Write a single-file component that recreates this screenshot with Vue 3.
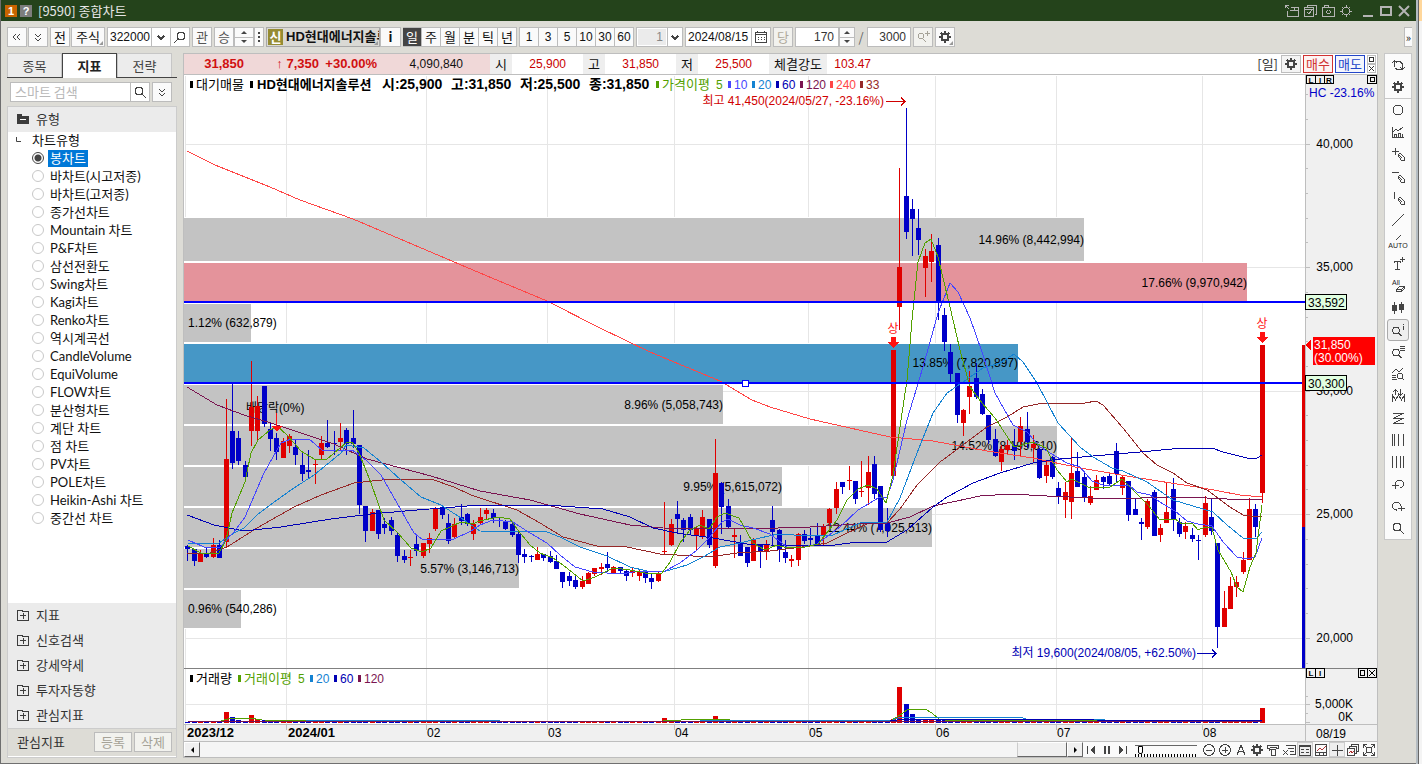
<script setup>
import { ref } from 'vue'

const GEAR = 'M8 4.5a3.5 3.5 0 1 0 .01 0zM8 2v2M8 12v2M2 8h2M12 8h2M4 4l1.500 1.500M10.500 10.500L12 12M4 12l1.500-1.500M10.500 5.500L12 4'
const LENS = 'M7 3a4 4 0 1 0 .01 0zM10 10l4 4'

const chartTypes = [
  '봉차트', '바차트(시고저종)', '바차트(고저종)', '종가선차트', 'Mountain 차트', 'P&F차트', '삼선전환도',
  'Swing차트', 'Kagi차트', 'Renko차트', '역시계곡선', 'CandleVolume', 'EquiVolume', 'FLOW차트',
  '분산형차트', '계단 차트', '점 차트', 'PV차트', 'POLE차트', 'Heikin-Ashi 차트', '중간선 차트',
]
const chartType = ref('봉차트')
const sections = ['지표', '신호검색', '강세약세', '투자자동향', '관심지표']
const periods = ['일', '주', '월', '분', '틱', '년']
const minutes = ['1', '3', '5', '10', '30', '60']

const titleIcons = [
  { n: '내보내기', d: 'M1 2l4 4M1.500 5V2.500H5M6.500 4.500h8v9h-11V8M6 7.500h8M10.500 4v3' },
  { n: '창 복사', d: 'M5.500 4V2.500h9v9h-2M2.500 4.500h9v9h-9zM3 6.500h8M5 9l2 2 3-4' },
  { n: '화면 캡처', d: 'M2.500 4.500h12v9h-12zM4 4V2.500h4V4M8.500 7a2 2 0 1 0 .01 0z' },
  { n: '설정', d: GEAR },
]

const sideTools = [
  { n: '새로고침', d: 'M4.500 10V4.500H10l2 2V9M2 6l2.500-2.500L7 6M12.500 7v5.500H7L5 11M10 10l2.500 2.500L15 10' },
  { n: '설정', d: GEAR, w: 2 },
  { n: '원', d: 'M8 3a5 5 0 1 0 .01 0z' },
  { n: '지표', d: 'M2.500 3v10.500H14M4.500 13v-3h2v3M8.500 13V9h2v4M12.500 13v-3M3 8l3-3 2 2 5-4' },
  { n: '십자선', d: 'M2 5.500h7M5.500 2v7M8 9l2-2 4 4v3h-3zM9 9l3 3' },
  { n: '수평선', d: 'M2 4.500h7M8 9l2-2 4 4v3h-3zM9 9l3 3' },
  { n: '수직선', d: 'M4.500 2v7M8 9l2-2 4 4v3h-3zM9 9l3 3' },
  { n: '추세선', d: 'M2 14L14 2' },
  { n: '자동추세선', d: 'M6 6l5-5', t: 'AUTO' },
  { n: '글자', d: 'M4.500 7V5.500h6V7M7.500 5v8M5 13.500h5M10 3.500h5M12.500 1v5' },
  { n: '전체삭제', d: 'M6.500 11.500l3-3h5v2l-3 3h-5zM7 11.500h4.500l3-3M11.500 11v3', a: 'All' },
  { n: '봉', d: 'M4.500 2v12M11.500 2v11', f: 'M2 5h5v6H2zM9 4h5v6H9z' },
  { n: '정보조회', d: 'M6 5a3.500 3.500 0 1 0 .01 0zM8.500 11l3 3M13.500 2v1M13.500 4v4', on: true },
  { n: '목록조회', d: 'M6 5a3.500 3.500 0 1 0 .01 0zM8.500 11l3 3M10 2.500h5M10 4.500h5M10 6.500h5' },
  { n: '패턴조회', d: 'M2 7l4-4 3 3 4-4M2 9.500h4M2 11.500h4M2 13.500h5M10 7a3 3 0 1 0 .01 0zM12 12l2 2' },
  { n: '고저표시', d: 'M2.500 14V7l3 5 3-5 3 5 3-5v7M5.500 2v5M3 4l2.500-2L8 4M10.500 1v6M8 5l2.500 2L13 5' },
  { n: '지그재그', d: 'M3 3.500h11M14 3L3 8.500h11M14 8L3 13.500h11' },
  { n: '분할선', d: 'M2.500 2v12M4.500 2v12M8.500 2v12M13.500 2v12' },
  { n: '등분선', d: 'M2.500 2v12M6.500 2v12M10.500 2v12M13.500 2v12' },
  { n: '되돌리기', d: 'M5.500 8a4 4 0 1 1 4 4M2 9.500h7M5.500 7v6' },
  { n: '다시하기', d: 'M10.500 8a4 4 0 1 0-4 4M8 10.500h7M11.500 8v5' },
  { n: '돋보기', d: LENS },
]

const bottomTools = [
  { n: '축소', d: 'M8 2.500a5.500 5.500 0 1 0 .01 0zM5 8.500h6' },
  { n: '확대', d: 'M8 2.500a5.500 5.500 0 1 0 .01 0zM5 8.500h6M8.500 5v6' },
  { n: '글자', d: 'M4 13L8 3l4 10M5.500 9.500h5' },
  { n: '설정', d: GEAR, w: 2 },
  { n: '도구', d: 'M2.500 3.500h11M2.500 3v3h2v2l3-1M13.500 3v3h-3M6.500 7.500h4v6h-4zM5 5.500h7' },
  { n: '엑셀', d: 'M5 3.500h9v9H9M7 6.500h6M9 9.500h4M2 8l5 5M7 8l-5 5' },
  { n: '데이터', d: 'M2.500 3.500h11v10h-11zM2 4.500h12M4 7.500h3M4 10.500h3M9 7.500h3M9 10.500h3', on: true },
  { n: '차트', d: 'M2.500 2.500h11v11h-11zM2 10.500h12M6.500 11v3M10.500 11v3', r: 'M4 9l3-3 2 2 4-4' },
  { n: '십자', d: 'M8.500 3v11M3 8.500h11', on: true },
  { n: '복사', d: 'M6.500 4V2.500h7v7H12M4.500 6V4.500h7v7H10M2.500 6.500h7v7h-7z', r: 'M4 11l2-2 1 2 2-2' },
  { n: '전체화면', d: 'M2.500 6V2.500H6M10 2.500h3.500V6M13.500 10v3.500H10M6 13.500H2.500V10M5.500 5.500h5v5h-5zM2 2l3 3M14 2l-3 3M2 14l3-3M14 14l-3-3' },
]

/* volume-at-price rows: y, height, right edge, label, fill */
const supply = [
  { y: 218, h: 43, x: 1084, t: '14.96% (8,442,994)', c: '#c3c3c3' },
  { y: 263, h: 39, x: 1247, t: '17.66% (9,970,942)', c: '#e4939b' },
  { y: 304, h: 38, x: 251, t: '1.12% (632,879)', c: '#c3c3c3', left: true },
  { y: 344, h: 38, x: 1018, t: '13.85% (7,820,897)', c: '#4697c6' },
  { y: 385, h: 39, x: 723, t: '8.96% (5,058,743)', c: '#c3c3c3' },
  { y: 426, h: 39, x: 1057, t: '14.52% (8,199,610)', c: '#c3c3c3' },
  { y: 467, h: 39, x: 782, t: '9.95% (5,615,072)', c: '#c3c3c3' },
  { y: 508, h: 39, x: 932, t: '12.44% (7,025,513)', c: '#c3c3c3' },
  { y: 549, h: 39, x: 519, t: '5.57% (3,146,713)', c: '#c3c3c3' },
  { y: 590, h: 38, x: 241, t: '0.96% (540,286)', c: '#c3c3c3', left: true },
]

/* one candle per entry: direction, high, body top, body bottom, low */
const candleData = `b545,546,549,561 b549,549,561,566 r550,554,562,562 b547,554,557,558 r538,545,557,558 b540,545,558,558
r399,459,542,548 b384,431,463,469 b431,438,461,465 b461,465,477,478 r361,407,431,446 r396,406,431,441
b386,386,424,427 b423,429,439,451 b433,438,452,460 r438,441,458,458 r434,436,446,453 b440,447,455,465
b452,465,474,481 b450,470,472,478 r459,464,465,484 r436,443,455,460 b420,443,447,448 b431,443,444,455
r423,438,442,450 b428,430,444,455 b410,438,444,448 b445,445,505,514 b506,506,531,542 r509,512,531,531
b510,510,534,539 b518,524,528,534 b517,520,531,535 b532,535,556,562 b550,556,560,563 r550,557,558,566
b535,544,551,556 r543,543,556,558 r533,538,544,553 r507,509,529,531 b506,507,515,519 b514,523,541,544
r518,524,537,538 b504,517,521,525 b513,514,524,526 r520,524,534,540 r508,517,523,525 r508,510,514,519
b509,513,518,523 b517,520,521,527 b520,522,529,530 b522,524,535,537 b532,534,555,563 b549,554,557,563
b555,556,557,562 r547,554,560,560 b554,554,558,561 b551,556,562,563 b555,561,569,569 b572,572,582,588
b572,576,581,586 b576,580,587,589 r576,581,587,589 r572,573,584,584 r568,568,574,576 r563,567,569,575
b552,564,568,572 r566,567,573,573 b567,567,571,574 b570,571,576,581 r567,571,573,577 r569,571,576,581
b571,571,578,583 b573,578,582,589 r572,573,581,582 r502,551,552,555 r519,524,545,546 b501,514,519,534
b518,520,530,542 b514,517,530,535 r526,528,536,551 r510,517,537,539 b519,519,545,548 r439,473,566,568
b482,483,507,534 b499,506,527,529 r528,535,537,558 b535,543,556,556 b547,547,563,567 r538,540,561,561
b545,545,552,568 r540,544,551,560 b506,520,532,546 b529,530,550,562 b540,552,558,563 r555,559,561,567
r533,534,560,566 b530,534,541,544 b528,538,540,545 b523,535,545,546 r524,526,535,546 r508,509,523,526
r482,489,508,514 b482,482,487,494 r466,480,481,490 b481,481,499,504 r461,491,492,497 r456,472,488,505
b456,464,494,499 b486,486,530,532 b508,523,531,537 r350,350,476,476 r168,267,307,330 b108,196,232,239
b199,209,219,256 b209,228,240,255 r249,256,268,297 r234,251,262,282 b238,245,303,320 b308,315,342,351
b344,352,374,382 b373,373,415,423 r409,410,423,436 r371,386,397,414 b363,378,397,399 b389,394,414,415
b415,415,440,444 b429,439,456,457 r445,449,462,471 r440,445,450,455 b429,445,451,460 r417,426,442,456
b412,429,442,448 r435,444,448,463 b448,449,478,479 r461,465,476,483 b456,457,477,479 b482,488,496,504
r482,492,500,518 r438,473,502,519 b452,471,487,487 b473,477,498,502 r486,496,503,505 r475,480,490,490
b476,477,482,489 b472,476,484,485 b443,451,474,482 r476,477,488,495 b481,481,515,521 b499,509,515,515
b518,522,524,540 r499,501,527,529 b490,492,536,536 r524,528,535,542 r482,512,523,523 b478,489,519,531
b518,522,534,537 r522,526,532,539 b528,535,539,542 b535,540,541,560 r496,503,535,537 b499,517,531,535
b543,543,627,648 r591,608,627,627 r577,586,609,609 r576,582,587,597 r552,560,572,574 r498,509,560,560
b504,509,527,537 r345,345,493,503`

/* volume bar tops that rise above the floor of the pane */
const volumeTops = { 6: 712, 7: 717, 8: 720, 10: 715, 11: 719, 12: 720, 75: 718, 76: 720, 83: 716, 84: 719, 92: 720, 111: 719, 112: 687, 113: 704, 114: 714, 115: 719, 116: 719, 117: 720, 118: 720, 119: 720, 124: 720, 169: 708 }

const candles = candleData.split(/\s+/).map((s, i) => {
  const [high, top, bottom, low] = s.slice(1).split(',').map(Number)
  const x = Math.round(187.4 + i * 6.357)
  return { x, high, top, low, h: Math.max(1, bottom - top), c: s[0] === 'r' ? '#e00000' : '#0000c8', v: volumeTops[i] || 722 }
})

const averages = [
  { c: '#ff4646', p: '187,151 215,165 240,175 270,187 300,200 353,219 426,250 480,273 547,301 600,328 650,352 720,381 752,400 770,407 810,419 890,437 933,441 987,451 1033,458 1080,468 1133,477 1177,484 1203,488 1240,495 1262,497' },
  { c: '#962828', p: '187,553 207,554 227,547 257,528 294,507 321,495 354,483 391,479 431,479 454,487 471,495 480,498 517,510 540,523 563,537 597,546 627,547 660,554 710,557 737,553 770,551 810,546 827,543 847,533 867,524 887,523 900,509 917,485 940,462 967,442 987,427 1007,417 1023,407 1043,403 1085,403 1096,401 1103,405 1123,428 1143,453 1157,465 1173,473 1187,483 1207,490 1230,507 1243,515 1257,517 1262,516' },
  { c: '#7a1450', p: '187,387 217,405 244,415 271,423 301,433 334,444 367,459 401,468 431,476 480,491 530,500 580,514 630,525 663,528 747,529 810,527 857,524 887,523 910,517 933,506 957,501 980,496 1010,494 1047,496 1113,499 1170,497 1207,498 1247,500 1262,499' },
  { c: '#0000b4', p: '187,515 214,525 244,531 281,527 331,519 371,514 417,510 480,505 547,505 603,509 630,517 653,528 677,533 713,538 747,544 770,545 827,546 850,543 887,542 907,530 933,507 947,497 973,483 1000,473 1033,463 1060,459 1093,456 1140,452 1183,448 1212,448 1223,452 1247,458 1257,458 1262,455' },
  { c: '#1482d2', p: '188,544 219,543 234,533 244,528 257,515 277,500 291,490 314,475 341,453 346,445 364,448 381,462 401,480 421,497 441,505 461,518 480,531 547,532 560,537 580,547 607,556 630,567 647,571 663,572 687,565 703,557 720,547 740,543 760,538 778,534 810,536 833,535 860,523 887,522 900,498 917,453 933,413 947,393 963,382 983,368 1000,363 1014,354 1023,362 1037,383 1058,423 1080,447 1093,457 1112,468 1123,471 1147,482 1173,500 1203,509 1213,512 1227,525 1243,538 1256,539 1262,532' },
  { c: '#4646ff', p: '188,540 204,547 219,548 234,532 245,517 264,473 281,443 291,439 309,439 322,450 334,451 352,450 366,460 381,475 397,503 414,533 422,539 454,539 471,531 480,525 493,520 513,522 530,533 547,543 560,555 575,567 593,572 620,574 640,571 663,572 680,563 697,550 709,538 722,522 728,519 740,525 753,528 770,534 787,547 800,548 817,544 840,527 858,510 880,497 887,497 893,480 907,420 920,377 927,353 938,313 950,283 958,292 970,318 982,352 995,393 1013,425 1027,432 1040,447 1067,463 1080,467 1092,481 1103,485 1129,485 1137,492 1150,495 1163,504 1175,511 1187,521 1198,524 1212,526 1223,542 1237,557 1247,559 1255,557 1262,538' },
  { c: '#52a000', p: '188,546 201,553 219,553 226,540 232,513 245,482 251,453 258,440 270,430 277,426 287,435 301,451 314,459 327,459 346,443 352,442 359,453 371,483 384,520 397,532 411,548 422,552 431,548 441,531 461,522 472,524 480,521 497,517 510,519 517,529 530,545 540,553 553,558 563,565 583,581 595,577 613,568 630,570 650,574 662,573 670,562 680,543 690,530 700,525 709,529 717,517 725,513 739,518 747,532 753,543 765,550 777,545 787,548 805,547 818,544 837,520 847,500 858,489 868,485 877,489 886,503 893,475 900,427 907,380 912,320 918,262 925,243 931,239 938,257 950,307 960,350 970,387 982,403 995,418 1014,447 1033,442 1046,448 1057,470 1067,482 1072,479 1090,488 1110,487 1122,479 1135,492 1148,505 1160,520 1175,519 1182,524 1192,523 1198,530 1205,527 1212,528 1218,550 1231,572 1237,587 1243,592 1250,567 1256,553 1262,505' },
]
const volumeAverages = [
  { c: '#52a000', p: '188,722 221,721 228,719 250,718 262,720 640,722 663,721 700,719 730,720 890,721 900,715 907,710 925,709 932,713 940,720 1262,721' },
  { c: '#1482d2', p: '188,722 425,720 500,721 700,721 893,720 900,717 1020,717 1026,719 1262,722' },
  { c: '#0000b4', p: '188,722 890,721 905,719 1042,719 1068,719 1094,720 1262,721' },
  { c: '#7a1450', p: '188,721 890,721 1262,721' },
]

const gridX = [185, 286, 426, 547, 674, 808, 935, 1056, 1202]
const prices = [{ y: 144, t: '40,000' }, { y: 267, t: '35,000' }, { y: 391, t: '30,000' }, { y: 514, t: '25,000' }, { y: 638, t: '20,000' }]
const minorTicks = [94, 119, 168, 193, 218, 242, 292, 317, 341, 366, 415, 440, 465, 489, 539, 564, 588, 613, 663, 696, 713]
const legend = [
  { x: 190, t: '대기매물', c: '#000', ko: true }, { x: 656, t: '가격이평', c: '#52a000', ko: true }, { x: 728, t: '10', c: '#4646ff' },
  { x: 752, t: '20', c: '#1482d2' }, { x: 776, t: '60', c: '#0000b4' }, { x: 800, t: '120', c: '#7a1450' },
  { x: 830, t: '240', c: '#ff4646' }, { x: 860, t: '33', c: '#962828' },
]
const volumeLegend = [
  { x: 190, t: '거래량', c: '#000', ko: true }, { x: 238, t: '거래이평', c: '#52a000', ko: true }, { x: 310, t: '20', c: '#1482d2' },
  { x: 334, t: '60', c: '#0000b4' }, { x: 358, t: '120', c: '#7a1450' },
]
const ohlc = [{ x: 382, t: '시:25,900' }, { x: 451, t: '고:31,850' }, { x: 520, t: '저:25,500' }, { x: 589, t: '종:31,850' }]
const months = [{ x: 427, t: '02' }, { x: 548, t: '03' }, { x: 675, t: '04' }, { x: 809, t: '05' }, { x: 936, t: '06' }, { x: 1057, t: '07' }, { x: 1203, t: '08' }]
const quotes = [{ l: '시', v: '25,900' }, { l: '고', v: '31,850' }, { l: '저', v: '25,500' }]
</script>

<template>
  <div class="screen">
    <div class="window">
      <header class="title">
        <span class="badge orange">1</span><span class="badge gray">?</span>
        <h1>[9590] 종합차트</h1>
        <div class="grp acts">
          <button v-for="i in titleIcons" :key="i.n" class="tbtn" :aria-label="i.n">
            <svg class="ic" viewBox="0 0 16 16"><path :d="i.d" /></svg>
          </button>
        </div>
        <button class="tbtn" aria-label="최소화"><svg class="ic" viewBox="0 0 16 16"><path class="thick" d="M3 13h10" /></svg></button>
        <button class="tbtn" aria-label="최대화"><svg class="ic" viewBox="0 0 16 16"><path class="thick" d="M3 4h10v8H3z" /></svg></button>
        <button class="tbtn" aria-label="닫기"><svg class="ic smooth" viewBox="0 0 16 16"><path class="thick" d="M3 3l10 10M13 3L3 13" /></svg></button>
      </header>

      <div class="toolbar">
        <div class="grp gap1">
          <button class="b" aria-label="이전"><svg class="ic" viewBox="0 0 16 16"><path d="M7 5L4 8l3 3M11 5L8 8l3 3" /></svg></button>
          <button class="b" aria-label="펼치기"><svg class="ic" viewBox="0 0 16 16"><path d="M5 5l3 3 3-3M5 9l3 3 3-3" /></svg></button>
        </div>
        <div class="grp gap1">
          <button class="b">전</button>
          <button class="b corner w34">주식</button>
        </div>
        <div class="grp box w83">
          <input class="code" aria-label="종목코드" value="322000">
          <button class="cell" aria-label="종목 목록"><svg class="ic" viewBox="0 0 16 16"><path class="thick" d="M5 7l3 3 3-3" /></svg></button>
          <button class="cell" aria-label="종목 검색"><svg class="ic" viewBox="0 0 16 16"><path d="M9 3a4 4 0 1 0 .01 0zM6 10l-4 4" /></svg></button>
        </div>
        <button class="b dim">관</button>
        <div class="grp">
          <button class="b dim">승</button>
          <div class="spin w20">
            <button aria-label="이전 종목"><i class="up"></i></button>
            <button aria-label="다음 종목"><i class="down"></i></button>
          </div>
          <button class="b w10" aria-label="더보기"><i class="dots"></i></button>
        </div>
        <div class="grp">
          <button class="b name corner"><em>신</em><b>HD현대에너지솔루션</b></button>
          <button class="b w21"><b>i</b></button>
        </div>
        <div class="grp joined">
          <button v-for="(p, i) in periods" :key="p" :class="{ on: i === 0 }">{{ p }}</button>
        </div>
        <div class="grp joined first">
          <button v-for="m in minutes" :key="m" class="n">{{ m }}</button>
        </div>
        <div class="grp box w47">
          <input class="off" aria-label="주기" value="1" disabled>
          <button class="cell w15" aria-label="주기 목록"><svg class="ic" viewBox="0 0 16 16"><path class="thick" d="M5 7l3 3 3-3" /></svg></button>
        </div>
        <div class="grp box w86">
          <input aria-label="날짜" value="2024/08/15">
          <button class="cell" aria-label="달력"><svg class="ic" viewBox="0 0 16 16"><path d="M2.500 3.500h11v10h-11zM2 5.500h12M5 8.500h1M8 8.500h1M11 8.500h1M5 10.500h1M8 10.500h1M11 10.500h1M4.500 2v2M11.500 2v2" /></svg></button>
        </div>
        <button class="b pale">당</button>
        <div class="grp">
          <div class="box w44"><input class="r" aria-label="표시 개수" value="170"></div>
          <div class="spin w16">
            <button aria-label="늘리기"><i class="up"></i></button>
            <button aria-label="줄이기"><i class="down"></i></button>
          </div>
        </div>
        <span class="slash">/</span>
        <div class="box w44"><input class="r" aria-label="전체 개수" value="3000"></div>
        <button class="b pale" aria-label="확대 조회"><svg class="ic" viewBox="0 0 16 16"><path d="M6 4a3 3 0 1 0 .01 0zM8 10l3 3M10 4.500h5M12.500 2v5" /></svg></button>
        <button class="b corner" aria-label="차트 설정"><svg class="ic" viewBox="0 0 16 16"><path class="thick" :d="GEAR" /></svg></button>
        <button class="more" aria-label="더보기">»</button>
      </div>

      <div class="body">
        <aside class="side">
          <div class="tabs">
            <button>종목</button><button class="on">지표</button><button>전략</button>
          </div>
          <div class="find">
            <div class="box grow">
              <input aria-label="스마트 검색" placeholder="스마트 검색">
              <button class="cell" aria-label="검색"><svg class="ic" viewBox="0 0 16 16"><path :d="LENS" /></svg></button>
            </div>
            <button class="b" aria-label="펼치기"><svg class="ic" viewBox="0 0 16 16"><path d="M5 5l3 3 3-3M5 9l3 3 3-3" /></svg></button>
          </div>
          <div class="tree">
            <h2><svg class="folder" viewBox="0 0 12 12"><path d="M0 1h5v2h7v8H0z" fill="#3c3c3c" /><path d="M3 6.500h6" stroke="#fff" /></svg>유형</h2>
            <div class="list" role="radiogroup" aria-label="차트유형">
              <p><svg class="elbow" viewBox="0 0 6 6"><path d="M.5 0v4.500H5" fill="none" stroke="#444" /></svg>차트유형</p>
              <label v-for="t in chartTypes" :key="t">
                <input v-model="chartType" type="radio" name="chart" :value="t"><span>{{ t }}</span>
              </label>
            </div>
            <button v-for="s in sections" :key="s" class="sec">
              <svg class="folder" viewBox="0 0 12 12"><path d="M.5 1.500h5v1h6v9H.5zM3 6.500h6M6.500 4v6" fill="none" stroke="#3c3c3c" /></svg>{{ s }}
            </button>
            <div class="foot"><span>관심지표</span><button>등록</button><button>삭제</button></div>
          </div>
        </aside>

        <main class="panel">
          <div class="strip">
            <div class="pink">
              <b class="c60">31,850</b><b class="c75">↑ 7,350</b><b class="c58">+30.00%</b><span class="c86">4,090,840</span>
            </div>
            <template v-for="q in quotes" :key="q.l"><span class="lab">{{ q.l }}</span><span class="val">{{ q.v }}</span></template>
            <span class="lab wide">체결강도</span><span class="val last">103.47</span>
            <span class="day">[일]</span>
            <button class="s gear" aria-label="설정"><svg class="ic" viewBox="0 0 16 16"><path class="thick" :d="GEAR" /></svg></button>
            <button class="s buy">매수</button>
            <button class="s sell">매도</button>
            <div class="mini">
              <button aria-label="최대화"><svg viewBox="0 0 9 9"><path d="M2.500 2.500h4v4h-4z" /></svg></button>
              <button aria-label="닫기"><svg viewBox="0 0 9 9"><path d="M2 2l5 5M7 2L2 7" /></svg></button>
            </div>
          </div>

          <svg class="chart" viewBox="184 75 1193 667" role="img" aria-label="HD현대에너지솔루션 일봉 차트">
            <g class="crisp">
              <rect x="1305" y="75" width="72" height="667" fill="#f0f0f0" />
              <rect x="184" y="725" width="1193" height="17" fill="#f0f0f0" />
              <rect v-for="x in gridX" :key="x" :x="x" y="76" width="1" height="648" fill="#e6e6e6" />
              <rect v-for="p in prices" :key="p.y" x="185" :y="p.y" width="1120" height="1" fill="#e6e6e6" />
              <rect x="185" y="704" width="1120" height="1" fill="#e6e6e6" />
              <rect v-for="s in supply" :key="s.y" x="184" :y="s.y - 1" :width="s.x - 184" :height="s.h + 2" fill="#fff" />
              <rect v-for="s in supply" :key="s.t" x="184" :y="s.y" :width="s.x - 184" :height="s.h" :fill="s.c" />
            </g>
            <text v-for="s in supply" :key="s.t" :x="s.left ? 188 : s.x" :y="Math.round(s.y + s.h / 2) + 4" :text-anchor="s.left ? 'start' : 'end'">{{ s.t }}</text>
            <text x="246" y="412">배당락(0%)</text>

            <g class="crisp">
              <template v-for="c in candles" :key="c.x">
                <rect :x="c.x" :y="c.high" width="1" :height="Math.max(1, c.low - c.high)" :fill="c.c" />
                <rect :x="c.x - 2" :y="c.top" width="5" :height="c.h" :fill="c.c" />
                <rect :x="c.x - 2" :y="c.v" width="5" :height="723 - c.v" :fill="c.c" />
              </template>
              <polyline v-for="a in averages" :key="a.c" :points="a.p" fill="none" :stroke="a.c" />
              <polyline v-for="a in volumeAverages" :key="a.c" :points="a.p" fill="none" :stroke="a.c" />
              <rect x="184" y="301" width="1121" height="2" fill="#00f" />
              <rect x="184" y="382" width="1121" height="2" fill="#00f" />
              <rect x="742.500" y="380.500" width="6" height="6" fill="#fff" stroke="#00f" />
              <path d="M891 337h5v5h3l-6 6-5-6h3zM1260 332h5v5h3l-6 6-5-6h3zM276 413h1v13h5l-5 5-6-5h5z" fill="#f11" />
              <rect x="1302" y="345" width="3" height="182" fill="#e00000" />
              <rect x="1302" y="527" width="3" height="141" fill="#0000c8" />
              <rect x="1305" y="75" width="1" height="667" fill="#bebebe" />
              <rect v-for="y in minorTicks" :key="y" x="1306" :y="y" width="2" height="1" fill="#bebebe" />
              <rect v-for="p in prices" :key="p.t" x="1306" :y="p.y" width="4" height="1" fill="#bebebe" />
              <path d="M1306 704.500h4M1306 722.500h4" stroke="#bebebe" />
              <rect x="184" y="668" width="1193" height="1" fill="#808080" />
              <rect x="184" y="724" width="1193" height="1" fill="#bebebe" />
              <rect x="184" y="741" width="1193" height="1" fill="#bebebe" />
              <rect v-for="x in gridX" :key="x" :x="x" y="725" width="1" height="5" fill="#bebebe" />
              <path d="M886 101.500h19M901 97.500l4 4-4 4" fill="none" stroke="#d00000" />
              <path d="M1197 653.500h19M1212 649.500l4 4-4 4" fill="none" stroke="#0000b4" />
              <rect v-for="l in legend" :key="l.x" :x="l.x" y="81" width="3" height="7" :fill="l.c" />
              <rect x="250" y="81" width="3" height="7" />
              <rect v-for="l in volumeLegend" :key="l.x" :x="l.x" y="675" width="3" height="7" :fill="l.c" />
            </g>

            <text v-for="l in legend" :key="l.x" :class="{ ko: l.ko }" :x="l.x + 6" y="89" :fill="l.c">{{ l.t }}</text>
            <text x="716" y="89" fill="#52a000">5</text>
            <text class="bold" x="257" y="89">HD현대에너지솔루션</text>
            <text v-for="o in ohlc" :key="o.x" class="bold big" :x="o.x" y="89">{{ o.t }}</text>
            <text v-for="l in volumeLegend" :key="l.x" :class="{ ko: l.ko }" :x="l.x + 6" y="683" :fill="l.c">{{ l.t }}</text>
            <text x="298" y="683" fill="#52a000">5</text>
            <text x="884" y="105" text-anchor="end" fill="#d00000">최고 41,450(2024/05/27, -23.16%)</text>
            <text x="1196" y="657" text-anchor="end" fill="#0000b4">최저 19,600(2024/08/05, +62.50%)</text>
            <text x="893" y="333" text-anchor="middle" fill="#f11">상</text>
            <text x="1262" y="328" text-anchor="middle" fill="#f11">상</text>

            <text x="1309" y="97" fill="#0000c8">HC -23.16%</text>
            <text v-for="p in prices" :key="p.t" x="1353" :y="p.y + 4" text-anchor="end">{{ p.t }}</text>
            <text x="1353" y="708" text-anchor="end">5,000K</text>
            <text x="1353" y="721" text-anchor="end">0K</text>
            <text x="1316" y="738">08/19</text>
            <text class="bold" x="187" y="737">2023/12</text>
            <text class="bold" x="288" y="737">2024/01</text>
            <text v-for="m in months" :key="m.t" :x="m.x" y="737">{{ m.t }}</text>

            <g class="crisp">
              <path d="M1305.500 294.500h41v15h-41zM1305.500 375.500h41v15h-41z" fill="#e1ffe1" stroke="#000" />
              <path d="M1313 337h62v28h-62zM1306 345l5-6v12z" fill="#f00" />
              <path d="M1306.500 75.500h27v8h-27zM1315.500 75v9M1324.500 75v9M1367.500 75.500h9v8h-9zM1370.500 77.500h4v4h-4zM1306.500 668.500h18v9h-18zM1315.500 668v9M1358.500 668.500h18v9h-18zM1367.500 668v9M1360.500 670.500h4v5h-4zM1369 670l6 6M1375 670l-6 6" fill="none" stroke="#000" />
            </g>
            <text x="1308" y="307">33,592</text>
            <text x="1308" y="388">30,300</text>
            <text x="1314" y="349" fill="#fff">31,850</text>
            <text x="1314" y="362" fill="#fff">(30.00%)</text>
            <g class="tiny">
              <text x="1311" y="83">L</text><text x="1320" y="83">I</text><text x="1329" y="83">R</text>
              <text x="1311" y="676">L</text><text x="1320" y="676">I</text>
            </g>
          </svg>

          <div class="bottom">
            <button class="arrow" aria-label="왼쪽"><i class="left"></i></button>
            <div class="track"><i class="thumb"></i></div>
            <button class="arrow" aria-label="오른쪽"><i class="right"></i></button>
            <button class="pl" aria-label="처음"><svg class="ic" viewBox="0 0 16 16"><path d="M4.500 4v8" /><path class="fill" d="M12 4v8L7 8z" /></svg></button>
            <button class="pl" aria-label="정지"><svg class="ic" viewBox="0 0 16 16"><path class="thick" d="M6 4v8M10 4v8" /></svg></button>
            <button class="pl" aria-label="다음"><svg class="ic" viewBox="0 0 16 16"><path class="fill" d="M4 4v8l5-4z" /><path d="M11.500 4v8" /></svg></button>
            <input class="speed" type="range" aria-label="재생 속도" min="0" max="20" value="1">
            <button v-for="t in bottomTools" :key="t.n" class="bt" :class="{ on: t.on }" :aria-label="t.n">
              <svg class="ic" viewBox="0 0 16 16"><path :class="{ thick: t.w === 2 }" :d="t.d" /><path v-if="t.r" class="red" :d="t.r" /></svg>
            </button>
          </div>
        </main>

        <nav class="tools" aria-label="그리기 도구">
          <button v-for="t in sideTools" :key="t.n" :class="{ on: t.on }" :aria-label="t.n">
            <svg class="ic" viewBox="0 0 16 16">
              <path :class="{ thick: t.w === 2 }" :d="t.d" />
              <path v-if="t.f" class="fill" :d="t.f" />
              <text v-if="t.t" x="8" y="14">{{ t.t }}</text>
              <text v-if="t.a" x="6" y="7">{{ t.a }}</text>
            </svg>
          </button>
        </nav>
      </div>
    </div>
    <div class="edge"></div>
  </div>
</template>

<style>
body { margin: 0; }
</style>

<style scoped>
* { box-sizing: border-box; }
.screen {
  --num: "Liberation Sans", "Noto Sans CJK KR", sans-serif;
  --ko: "Noto Sans CJK KR", "Noto Sans", sans-serif;
  display: flex; min-height: 100vh; font: 13px/16px var(--ko); color: #111; background: #dddcd6;
}
button, input { font: inherit; color: inherit; margin: 0; padding: 0; border-radius: 0; }
button { display: inline-flex; align-items: center; justify-content: center; background: none; border: 0; white-space: nowrap; }
input { min-width: 0; border: 0; background: #fff; outline: 0; }
.window { flex: 1; min-width: 0; display: flex; flex-direction: column; border-left: 1px solid #6e6e6e; border-bottom: 1px solid #707070; }
.edge { width: 6px; border-left: 2px solid #b4bcc2; background: linear-gradient(90deg, #666 1px, transparent 1px), linear-gradient(#ffd79b 21px, #f4f4f4 21px); }
.ic { width: 16px; height: 16px; flex: none; fill: none; stroke: #444; stroke-width: 1; shape-rendering: crispEdges; overflow: visible; }
.ic .thick { stroke-width: 2; }
.ic .fill { fill: #444; stroke: none; }
.ic .red { stroke: #b03030; }
.ic text { font: 7px "Liberation Sans", sans-serif; fill: #222; stroke: none; text-anchor: middle; }
.smooth { shape-rendering: auto; }

.title { display: flex; align-items: center; height: 21px; padding: 0 3px 0 4px; background: #24431b; color: #e6e6e6; }
.badge { width: 12px; height: 12px; margin-right: 3px; font: bold 11px/12px "Liberation Sans", sans-serif; text-align: center; color: #fff; }
.orange { background: #c86400; }
.gray { background: #7d7d7d; }
.title h1 { flex: 1; margin: 0 0 0 3px; font-size: 13px; font-weight: 400; line-height: 20px; }
.acts { padding-right: 4px; }
.tbtn { width: 18px; height: 20px; }
.tbtn .ic { stroke: #b4b4b4; }

.toolbar { display: flex; align-items: center; gap: 2px; height: 32px; padding-left: 6px; }
.grp { display: flex; height: 20px; flex: none; }
.gap1 { gap: 1px; }
.b { position: relative; width: 20px; height: 20px; flex: none; background: #fafafa; border: 1px solid #bcbcbc; }
.b.dim { color: #555; }
.b.pale { color: #b0aa9c; background: #f2f2ee; }
.b.pale .ic { stroke: #a5a297; }
.corner::after { content: ""; position: absolute; right: 1px; bottom: 1px; border: 2px solid; border-color: transparent #999 #999 transparent; }
.w15.w15 { width: 15px; } .w16 { width: 16px; } .w20 { width: 20px; } .b.w21 { width: 21px; } .b.w34 { width: 34px; }
.w44 { width: 44px; } .w47 { width: 47px; } .w83 { width: 83px; } .w86 { width: 86px; }
.b.w10 { width: 10px; }
.box { display: flex; flex: none; height: 20px; background: #fff; border: 1px solid #bcbcbc; }
.box input { flex: 1; width: 0; padding-left: 2px; font: 12px/18px var(--num); }
.box input.r { text-align: right; padding-right: 4px; color: #333; }
.box input.off { text-align: right; padding-right: 3px; background: #ebebeb; border: 1px solid #fff; color: #888; }
.cell { width: 19px; border-left: 1px solid #bcbcbc; background: #fff; }
.spin { display: flex; flex-direction: column; border: 1px solid #bcbcbc; background: #fafafa; }
.spin button { flex: 1; }
.spin button + button { border-top: 1px solid #bcbcbc; }
.up { border: 3px solid transparent; border-top: 0; border-bottom-color: #444; }
.down { border: 3px solid transparent; border-bottom: 0; border-top-color: #444; }
.dots { width: 2px; height: 11px; background: linear-gradient(#444 2px, transparent 2px) 0 0 / 2px 4px; }
.b.name { width: 114px; justify-content: flex-start; overflow: hidden; background: #dad9d4; border-color: #a8a8a8; }
.name em { width: 15px; height: 16px; margin: 0 3px 0 1px; font-style: normal; font-weight: 700; line-height: 15px; color: #fff; background: #968c32; flex: none; }
.name b { flex: 1; overflow: hidden; font: bold 13px/18px "Liberation Sans", var(--ko); text-align: left; }
.joined { border: solid #bcbcbc; border-width: 1px 0; background: #fafafa; }
.joined button { width: 19px; border-right: 1px solid #bcbcbc; }
.joined .on { color: #fff; background: #444; }
.joined .n { font: 12px/18px var(--num); }
.first { border-left-width: 1px; }
.slash { width: 8px; text-align: center; color: #666; }
.more { width: 8px; height: 20px; margin: 0 4px 0 auto; border: solid #bcbcbc; border-width: 1px 0 1px 1px; background: #fafafa; font-size: 11px; }

.body { flex: 1; display: flex; gap: 6px; padding: 0 4px 5px 6px; align-items: stretch; }
.side { width: 170px; flex: none; display: flex; flex-direction: column; }
.tabs { display: flex; height: 25px; padding-right: 5px; border-bottom: 1px solid #444; }
.tabs button { flex: 1; height: 24px; border: 1px solid #c6c6c6; border-bottom: 0; background: #ececec; color: #444; }
.tabs .on { height: 25px; border-color: #444; background: #fff; color: #222; font-weight: 700; }
.find { display: flex; gap: 2px; padding: 4px 5px 4px 3px; }
.grow { flex: 1; }
.box.grow input { font: 13px/18px var(--ko); padding-left: 4px; }
.box.grow input::placeholder { color: #b8b8b8; opacity: 1; }
.tree { flex: 1; display: flex; flex-direction: column; border: 1px solid #ccc; background: #ebebeb; }
.tree h2 { display: flex; align-items: center; height: 25px; margin: 0; padding: 0 0 2px 9px; font-size: 13px; font-weight: 400; color: #333; }
.folder { width: 12px; height: 12px; margin-right: 7px; flex: none; shape-rendering: crispEdges; }
.list { flex: 1; background: #fff; }
.list p { display: flex; align-items: center; height: 17px; margin: 0; padding-bottom: 2px; }
.elbow { width: 6px; height: 6px; margin: 0 10px 0 8px; }
.list label { display: flex; align-items: center; height: 18px; padding-left: 24px; white-space: nowrap; }
.list input { appearance: none; width: 12px; height: 12px; flex: none; margin-right: 4px; border: 1px solid #c8c8c8; border-radius: 50%; }
.list input:checked { border-color: #444; background: radial-gradient(#444 3px, transparent 4px); }
.list span { height: 17px; padding: 0 2px; font: 13px/16px Lato, "Noto Sans CJK KR", sans-serif; }
.list input:checked + span { color: #fff; background: #0078d7; }
.sec { height: 25px; justify-content: flex-start; padding: 0 0 2px 9px; color: #333; }
.foot { display: flex; align-items: center; gap: 2px; height: 29px; padding: 0 4px 2px 9px; border-top: 1px solid #ccc; border-bottom: 1px solid #fff; background: #dddcd6; color: #333; }
.foot span { flex: 1; }
.foot button { width: 38px; height: 20px; border: 1px solid #bcbcbc; background: #f2f2ee; color: #a5a297; }

.panel { flex: 1; min-width: 0; border: 1px solid #bebebe; background: #fff; }
.strip { display: flex; align-items: center; height: 21px; border-bottom: 1px solid #bebebe; font: 12px/20px var(--num); color: #111; }
.strip b { font: bold 13px/20px "Liberation Sans", sans-serif; color: #d01010; }
.pink { display: flex; padding-right: 27px; background: #f0d8d8; }
.pink > * { text-align: right; white-space: nowrap; }
.c60 { width: 60px; } .c75 { width: 75px; } .c58 { width: 58px; } .c86 { width: 86px; }
.lab { width: 22px; text-align: center; background: #eee; font: 13px/20px var(--ko); }
.lab.wide { width: 58px; }
.val { width: 71px; padding-right: 17px; text-align: right; color: #c80000; }
.val.last { padding-right: 27px; }
.day { margin: 0 3px 0 auto; font: 13px/20px var(--ko); color: #333; }
.s { height: 18px; border: 1px solid #bebebe; font: 13px/16px var(--ko); }
.gear { width: 20px; background: #f4f4f4; margin-right: 2px; }
.buy { width: 30px; margin-right: 2px; border-color: #d03232; background: #fdf4f4; color: #d03232; }
.sell { width: 30px; margin-right: 2px; border-color: #2346c8; background: #f4f6fd; color: #2346c8; }
.mini { display: flex; flex-direction: column; margin-right: 1px; }
.mini button { width: 9px; height: 9px; border: 1px solid #bebebe; }
.mini svg { width: 9px; height: 9px; fill: none; stroke: #333; flex: none; shape-rendering: crispEdges; }

.chart { display: block; width: 100%; }
.chart text { font: 12px var(--num); white-space: pre; }
.chart .ko { font: 13px var(--ko); }
.chart .bold { font: bold 13px "Liberation Sans", "Noto Sans CJK KR", sans-serif; }
.chart .big { font-size: 14px; }
.chart .tiny text { font: bold 8px "Liberation Sans", sans-serif; text-anchor: middle; }
.crisp { shape-rendering: crispEdges; }

.bottom { display: flex; align-items: center; height: 15px; background: #fafafa; }
.arrow { width: 16px; height: 15px; flex: none; border: 1px solid; border-color: #fff #666 #666 #fff; background: #f0f0f0; }
.left { border: 3px solid transparent; border-left: 0; border-right-color: #000; }
.right { border: 3px solid transparent; border-right: 0; border-left-color: #000; }
.track { flex: 1; display: flex; justify-content: flex-end; height: 15px; background: #f5f5f5; }
.thumb { width: 50px; border: 1px solid; border-color: #fff #666 #666 #ccc; background: #f0f0f0; }
.pl { width: 16px; height: 15px; }
.speed { appearance: none; width: 62px; height: 14px; margin: 0 4px; background: linear-gradient(#666, #666) 0 2px / 100% 1px no-repeat, repeating-linear-gradient(90deg, #000 0 1px, transparent 1px 3px) 0 11px / 100% 3px no-repeat; }
.speed::-webkit-slider-thumb { appearance: none; width: 5px; height: 8px; border: 1px solid #000; border-radius: 0 0 2px 2px; background: #fff; }
.bt { width: 16px; height: 15px; }
.bt.on { background: #eee; border: 1px solid #ccc; }

.tools { align-self: flex-start; width: 28px; display: flex; flex-direction: column; align-items: center; border: 1px solid #c8c8c8; background: #fbfbfb; }
.tools button { width: 22px; height: 22px; }
.tools button:nth-child(2) { width: 26px; height: 23px; border-bottom: 1px solid #c8c8c8; }
.tools .on { border: 1px solid #aaa; border-radius: 3px; background: #eee; }
</style>
